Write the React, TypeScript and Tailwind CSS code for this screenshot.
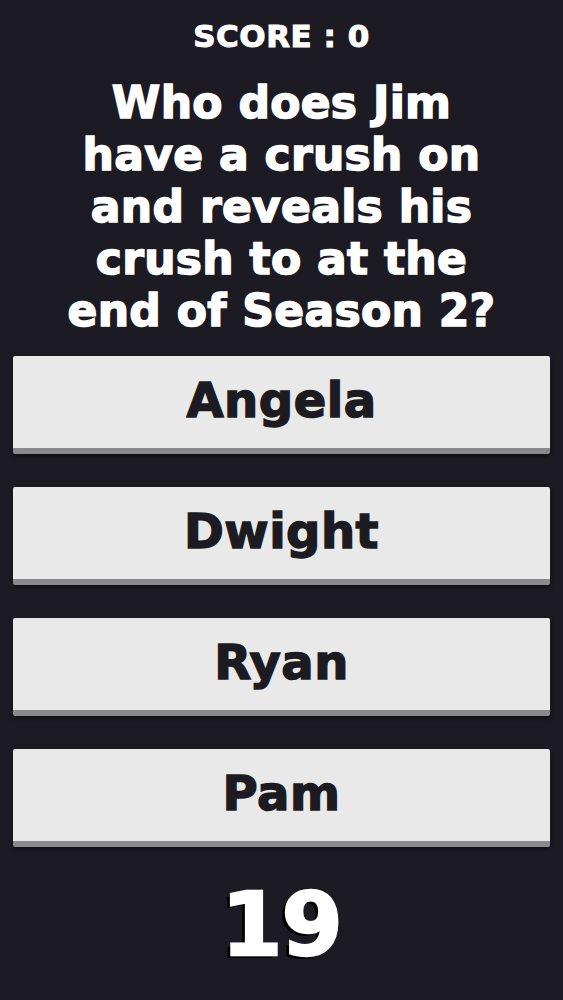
import React from 'react';

const answers = ['Angela', 'Dwight', 'Ryan', 'Pam'];
const questionLines = ['Who does Jim', 'have a crush on', 'and reveals his', 'crush to at the', 'end of Season 2?'];

function AnswerButton({ label }: { label: string }) {
  return (
    <button className="flex h-[98px] w-full items-center justify-center rounded-[2px] border-b-[6px] border-[#8a8a8e] bg-[#e9e9ea] text-[48px] font-bold leading-none tracking-[0.5px] text-[#1c1b22] shadow-[0_2px_4px_rgba(0,0,0,0.5)] [-webkit-text-stroke:1.5px_#1c1b22]">
      <span className="-mt-[4px]">{label}</span>
    </button>
  );
}

export default function App() {
  return (
    <div
      className="flex h-[1000px] w-full flex-col items-center bg-[#1c1b24] text-white"
      style={{ fontFamily: '"DejaVu Sans", "Noto Sans", sans-serif' }}
    >
      <div className="mt-[18px] text-[31px] font-bold leading-[36px] tracking-[0.5px] [-webkit-text-stroke:1px_white]">
        SCORE : 0
      </div>
      <h1 className="mt-[23px] text-center text-[44px] font-bold leading-[52px] tracking-[0.3px] [-webkit-text-stroke:1.5px_white]">
        {questionLines.map((l) => (
          <span key={l} className="block whitespace-nowrap">
            {l}
          </span>
        ))}
      </h1>
      <div className="mt-[19px] flex w-full flex-col gap-[33px] px-[13px]">
        {answers.map((a) => (
          <AnswerButton key={a} label={a} />
        ))}
      </div>
      <div className="mt-[34px] text-[88px] font-bold leading-none tracking-[-1px] [-webkit-text-stroke:2.5px_white] [text-shadow:-4px_3px_0_#000]">
        19
      </div>
    </div>
  );
}
